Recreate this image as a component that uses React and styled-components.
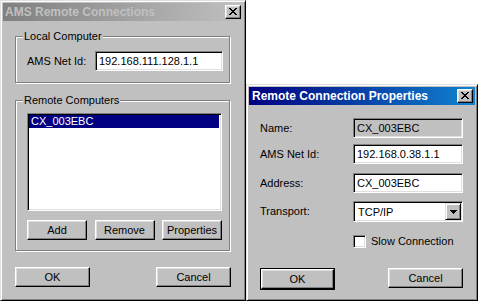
import React from 'react';
import styled, { createGlobalStyle } from 'styled-components';

const GlobalStyle = createGlobalStyle`
  html, body {
    margin: 0;
    padding: 0;
    background: #fff;
  }
  body {
    font-family: "Liberation Sans", Arial, sans-serif;
    font-size: 11px;
    color: #000;
  }
`;

const Desktop = styled.div`
  position: relative;
  width: 479px;
  height: 301px;
  overflow: hidden;
  background: #fff;
`;

const Window = styled.div`
  position: absolute;
  left: ${p => p.$x}px;
  top: ${p => p.$y}px;
  width: ${p => p.$w}px;
  height: ${p => p.$h}px;
  box-sizing: border-box;
  display: flex;
  flex-direction: column;
  background: #c0c0c0;
  border: 1px solid;
  border-color: #dfdfdf #000 #000 #dfdfdf;
  box-shadow: inset 1px 1px #fff, inset -1px -1px #808080;
  padding: 2px;
`;

const TitleBar = styled.div`
  flex: none;
  height: 18px;
  display: flex;
  align-items: center;
  justify-content: space-between;
  padding: 0 2px 0 ${p => (p.$active ? 3 : 2)}px;
  background: ${p =>
    p.$active
      ? 'linear-gradient(to right, #000080, #1084d0)'
      : 'linear-gradient(to right, #808080, #c0c0c0)'};
  color: ${p => (p.$active ? '#fff' : '#c0c0c0')};
  font-size: 12px;
  font-weight: bold;
  white-space: nowrap;
`;

const CloseButton = styled.div`
  width: 16px;
  height: 14px;
  box-sizing: border-box;
  display: flex;
  align-items: center;
  justify-content: center;
  background: #c0c0c0;
  border: 1px solid;
  border-color: #fff #000 #000 #fff;
  box-shadow: inset -1px -1px #808080, inset 1px 1px #dfdfdf;
  svg {
    display: block;
    margin: 0 0 1px 0;
  }
`;

const Body = styled.div`
  flex: 1;
  display: flex;
  flex-direction: column;
  padding: ${p => p.$pad};
`;

const Group = styled.fieldset`
  width: 215px;
  margin: ${p => p.$top || 0}px 0 0 0;
  padding: 0;
  min-width: 0;
  box-sizing: border-box;
  border: 1px solid #808080;
  box-shadow: 1px 1px 0 #fff, inset 1px 1px 0 #fff;
`;

const Legend = styled.legend`
  margin-left: 7px;
  padding: 0 1px;
  line-height: 13px;
  background: #c0c0c0;
`;

const GroupInner = styled.div`
  display: flex;
  flex-direction: column;
  padding: ${p => p.$pad};
`;

const Row = styled.div`
  display: flex;
  align-items: center;
  justify-content: space-between;
`;

const Label = styled.span`
  line-height: 13px;
  white-space: nowrap;
`;

const Edit = styled.div`
  width: ${p => p.$w}px;
  height: 20px;
  box-sizing: border-box;
  display: flex;
  align-items: center;
  padding: 0 0 1px 3px;
  background: ${p => (p.$readOnly ? '#c0c0c0' : '#fff')};
  border: 1px solid;
  border-color: #808080 #fff #fff #808080;
  box-shadow: inset 1px 1px #000, inset -1px -1px #dfdfdf;
  white-space: nowrap;
`;

const ListBox = styled.div`
  height: 98px;
  box-sizing: border-box;
  background: #fff;
  border: 1px solid;
  border-color: #808080 #fff #fff #808080;
  box-shadow: inset 1px 1px #000, inset -1px -1px #dfdfdf;
  padding: 1px 2px 1px 1px;
`;

const ListItem = styled.div`
  height: 13px;
  line-height: 13px;
  padding-left: 2px;
  background: ${p => (p.$selected ? '#000080' : 'transparent')};
  color: ${p => (p.$selected ? '#fff' : '#000')};
`;

const ButtonRow = styled.div`
  display: flex;
  justify-content: space-between;
  margin-top: ${p => p.$top}px;
`;

const Button = styled.div`
  width: ${p => p.$w}px;
  height: 20px;
  box-sizing: border-box;
  display: flex;
  align-items: center;
  justify-content: center;
  padding-bottom: 1px;
  background: #c0c0c0;
  border: 1px solid;
  border-color: #fff #000 #000 #fff;
  box-shadow: inset -1px -1px #808080, inset 1px 1px #dfdfdf;
  outline: ${p => (p.$default ? '1px solid #000' : 'none')};
  outline-offset: 0;
  margin: ${p => (p.$default ? '1px' : '0')};
`;

const Form = styled.div`
  display: flex;
  flex-direction: column;
  padding-left: 11px;
  width: 203px;
`;

const FieldRow = styled.div`
  display: grid;
  grid-template-columns: 93px 110px;
  align-items: center;
  margin-top: ${p => p.$top}px;
`;

const Combo = styled.div`
  height: 21px;
  box-sizing: border-box;
  display: flex;
  align-items: center;
  justify-content: space-between;
  padding: 1px 1px 1px 4px;
  background: #fff;
  border: 1px solid;
  border-color: #808080 #fff #fff #808080;
  box-shadow: inset 1px 1px #000, inset -1px -1px #dfdfdf;
`;

const DropButton = styled.div`
  width: 16px;
  height: 17px;
  box-sizing: border-box;
  display: flex;
  align-items: center;
  justify-content: center;
  background: #c0c0c0;
  border: 1px solid;
  border-color: #dfdfdf #000 #000 #dfdfdf;
  box-shadow: inset 1px 1px #fff, inset -1px -1px #808080;
`;

const Check = styled.div`
  width: 13px;
  height: 13px;
  box-sizing: border-box;
  background: #fff;
  border: 1px solid;
  border-color: #808080 #fff #fff #808080;
  box-shadow: inset 1px 1px #000, inset -1px -1px #dfdfdf;
`;

const CheckRow = styled.div`
  display: flex;
  align-items: center;
  gap: 5px;
  margin: ${p => p.$top}px 0 0 93px;
`;

const CloseGlyph = () => (
  <svg width="8" height="7" viewBox="0 0 8 7" shapeRendering="crispEdges">
    <path
      fill="#000"
      d="M0 0h2v1H0zM6 0h2v1H6zM1 1h2v1H1zM5 1h2v1H5zM2 2h4v1H2zM3 3h2v1H3zM2 4h4v1H2zM1 5h2v1H1zM5 5h2v1H5zM0 6h2v1H0zM6 6h2v1H6z"
    />
  </svg>
);

const ArrowGlyph = () => (
  <svg width="7" height="4" viewBox="0 0 7 4" shapeRendering="crispEdges">
    <path fill="#000" d="M0 0h7v1H0zM1 1h5v1H1zM2 2h3v1H2zM3 3h1v1H3z" />
  </svg>
);

const App = () => {
  return (
    <Desktop>
      <GlobalStyle />

      <Window $x={0} $y={0} $w={246} $h={301}>
        <TitleBar>
          <span>AMS Remote Connections</span>
          <CloseButton>
            <CloseGlyph />
          </CloseButton>
        </TitleBar>
        <Body $pad="9px 12px 0 12px">
          <Group>
            <Legend>Local Computer</Legend>
            <GroupInner $pad="8px 6px 11px 11px">
              <Row>
                <Label>AMS Net Id:</Label>
                <Edit $w={128}>192.168.111.128.1.1</Edit>
              </Row>
            </GroupInner>
          </Group>

          <Group $top={11}>
            <Legend>Remote Computers</Legend>
            <GroupInner $pad="6px 7px 10px 11px">
              <ListBox>
                <ListItem $selected>CX_003EBC</ListItem>
              </ListBox>
              <ButtonRow $top={9}>
                <Button $w={60}>Add</Button>
                <Button $w={60}>Remove</Button>
                <Button $w={60}>Properties</Button>
              </ButtonRow>
            </GroupInner>
          </Group>

          <ButtonRow $top={16}>
            <Button $w={75}>OK</Button>
            <Button $w={75}>Cancel</Button>
          </ButtonRow>
        </Body>
      </Window>

      <Window $x={246} $y={84} $w={232} $h={217}>
        <TitleBar $active>
          <span>Remote Connection Properties</span>
          <CloseButton>
            <CloseGlyph />
          </CloseButton>
        </TitleBar>
        <Body $pad="0">
          <Form>
            <FieldRow $top={13}>
              <Label>Name:</Label>
              <Edit $w={110} $readOnly>CX_003EBC</Edit>
            </FieldRow>
            <FieldRow $top={6}>
              <Label>AMS Net Id:</Label>
              <Edit $w={110}>192.168.0.38.1.1</Edit>
            </FieldRow>
            <FieldRow $top={9}>
              <Label>Address:</Label>
              <Edit $w={110}>CX_003EBC</Edit>
            </FieldRow>
            <FieldRow $top={8}>
              <Label>Transport:</Label>
              <Combo>
                <span>TCP/IP</span>
                <DropButton>
                  <ArrowGlyph />
                </DropButton>
              </Combo>
            </FieldRow>
            <CheckRow $top={13}>
              <Check />
              <Label>Slow Connection</Label>
            </CheckRow>
            <ButtonRow $top={20}>
              <Button $w={73} $default>OK</Button>
              <Button $w={75}>Cancel</Button>
            </ButtonRow>
          </Form>
        </Body>
      </Window>
    </Desktop>
  );
};

export default App;
